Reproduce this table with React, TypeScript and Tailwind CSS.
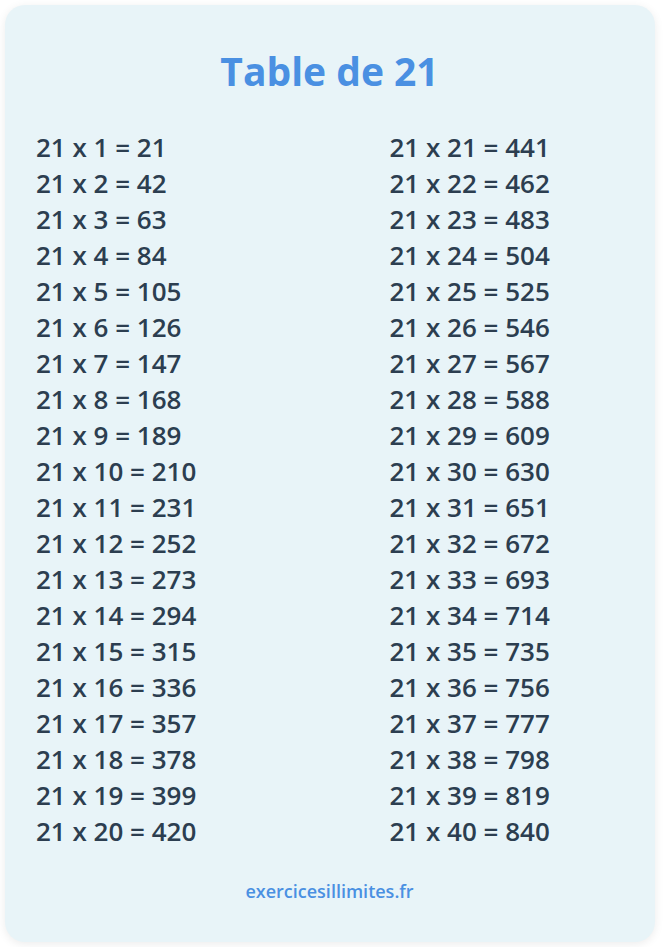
import React from 'react';

const rows = Array.from({ length: 20 }, (_, i) => i + 1);

export default function App() {
  return (
    <div className="min-h-screen w-[665px] bg-white pt-[5px] pl-[5px]" style={{ fontFamily: '"Open Sans", "Liberation Sans", sans-serif' }}>
      <div className="w-[650px] h-[937px] rounded-[20px] bg-[#e8f4f8] shadow-[0_2px_10px_rgba(0,0,0,0.08)] pl-[31px] pr-8 pt-[42px]">
        {/* Title */}
        <h1 className="text-center text-[39px] leading-[48px] font-bold text-[#4a90e2]">Table de 21</h1>

        {/* Multiplication rows */}
        <div className="mt-[34px] grid grid-cols-2 gap-x-[120px]">
          <div className="flex flex-col">
            {rows.map((n) => (
              <div key={n} className="text-[26px] leading-[36px] font-semibold text-[#2c3e50]">
                21 x {n} = {21 * n}
              </div>
            ))}
          </div>
          <div className="flex flex-col">
            {rows.map((n) => (
              <div key={n} className="text-[26px] leading-[36px] font-semibold text-[#2c3e50]">
                21 x {n + 20} = {21 * (n + 20)}
              </div>
            ))}
          </div>
        </div>

        {/* Footer */}
        <div className="mt-[29px] text-center text-[18px] leading-[27px] font-semibold text-[#4a90e2]">exercicesillimites.fr</div>
      </div>
    </div>
  );
}
